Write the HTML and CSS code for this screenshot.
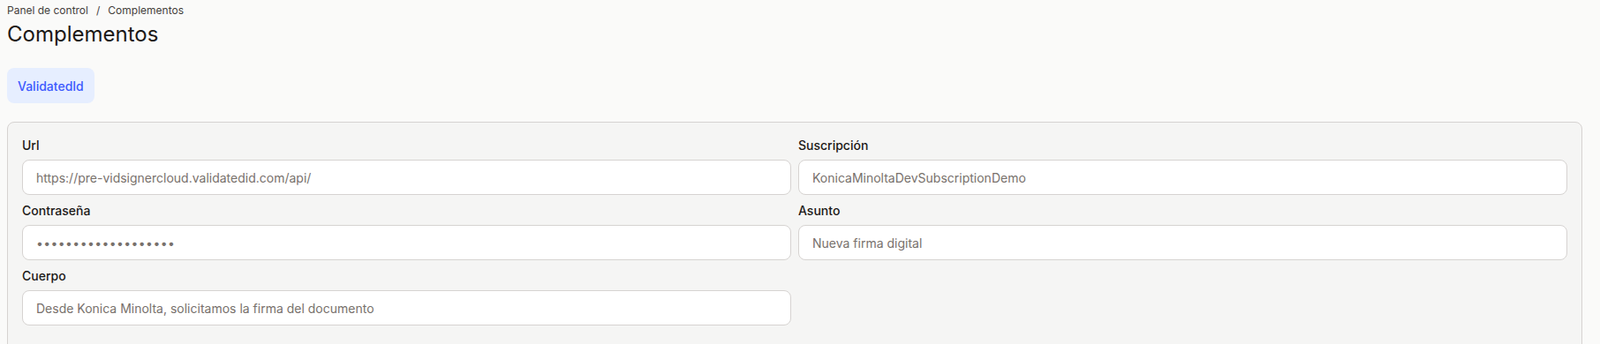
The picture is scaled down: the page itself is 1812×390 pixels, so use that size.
FILE: index.html
```html
<!DOCTYPE html>
<html lang="es">
<head>
    <meta charset="UTF-8">
    <meta name="viewport" content="width=device-width, initial-scale=1.0">
    <title>Complementos</title>
    <link rel="stylesheet" href="styles.css">
</head>
<body>

<nav class="breadcrumb">
    <span>Panel de control</span>
    <span class="sep">/</span>
    <span>Complementos</span>
</nav>

<h1>Complementos</h1>

<div class="tabs">
    <button type="button" class="tab active">ValidatedId</button>
</div>

<form class="panel">
    <div class="form-group">
        <label for="url">Url</label>
        <input type="text" id="url" value="https://pre-vidsignercloud.validatedid.com/api/">
    </div>
    <div class="form-group">
        <label for="subscription">Suscripción</label>
        <input type="text" id="subscription" value="KonicaMinoltaDevSubscriptionDemo">
    </div>
    <div class="form-group">
        <label for="password">Contraseña</label>
        <input type="password" id="password" value="xxxxxxxxxxxxxxxxxxx">
    </div>
    <div class="form-group">
        <label for="subject">Asunto</label>
        <input type="text" id="subject" value="Nueva firma digital">
    </div>
    <div class="form-group">
        <label for="body">Cuerpo</label>
        <input type="text" id="body" value="Desde Konica Minolta, solicitamos la firma del documento">
    </div>
</form>

</body>
</html>
```

FILE: styles.css
```css
body {
    font-family: Inter, "Noto Sans", sans-serif;
    margin: 0;
    padding: 0 20px 40px 8px;
    background-color: #fafaf9;
    color: #1c1917;
}
.breadcrumb {
    display: flex;
    gap: 9px;
    padding-top: 4px;
    font-size: 12px;
    line-height: 16px;
    color: #44403c;
}
h1 {
    margin: 3px 0 0;
    font-size: 24px;
    line-height: 32px;
    font-weight: 400;
}
.tabs {
    margin-top: 22px;
    display: flex;
}
.tab {
    height: 40px;
    padding: 0 12px;
    font-family: inherit;
    font-size: 14px;
    font-weight: 500;
    color: #3d5afe;
    background-color: #e6eeff;
    border: none;
    border-radius: 8px;
}
.panel {
    margin-top: 21px;
    padding: 16px;
    display: grid;
    grid-template-columns: 1fr 1fr;
    gap: 8px;
    background-color: #f5f5f4;
    border: 1px solid #d6d3d1;
    border-radius: 8px;
    min-height: 300px;
    align-content: start;
}
.form-group label {
    display: block;
    margin-bottom: 6px;
    font-size: 14px;
    line-height: 20px;
    font-weight: 500;
}
.form-group input {
    display: block;
    width: 100%;
    height: 40px;
    padding: 0 15px;
    box-sizing: border-box;
    font-family: inherit;
    font-size: 14px;
    color: #78716c;
    background-color: #fff;
    border: 1px solid #d6d3d1;
    border-radius: 8px;
}
.form-group input[type="password"] {
    letter-spacing: 0.4px;
}
```
